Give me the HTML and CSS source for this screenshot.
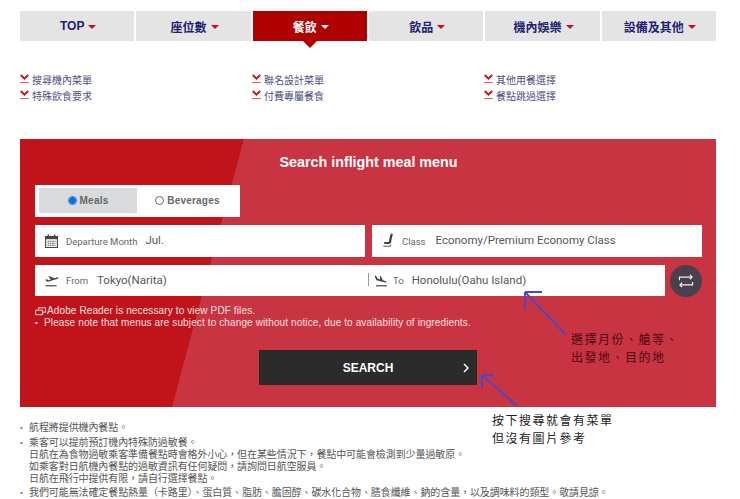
FILE: index.html
```html
<!DOCTYPE html>
<html lang="zh-Hant">
<head>
<meta charset="utf-8">
<title>機內餐飲</title>
<link rel="stylesheet" href="styles.css">
</head>
<body>
<div class="page">
  <nav class="tabs">
    <a class="tab">TOP<i class="caret"></i></a>
    <a class="tab">座位數<i class="caret"></i></a>
    <a class="tab active">餐飲<i class="caret"></i></a>
    <a class="tab">飲品<i class="caret"></i></a>
    <a class="tab">機內娛樂<i class="caret"></i></a>
    <a class="tab">設備及其他<i class="caret"></i></a>
  </nav>

  <div class="links">
    <a class="link"><svg class="chev" viewBox="0 0 9 10"><path d="M.8 1l3.700 3.700L8.200 1" fill="none" stroke="#c8141c" stroke-width="1.900"/><path d="M0 8.600h9" stroke="#d9534f" stroke-width="1"/></svg>搜尋機內菜單</a>
    <a class="link"><svg class="chev" viewBox="0 0 9 10"><path d="M.8 1l3.700 3.700L8.200 1" fill="none" stroke="#c8141c" stroke-width="1.900"/><path d="M0 8.600h9" stroke="#d9534f" stroke-width="1"/></svg>聯名設計菜單</a>
    <a class="link"><svg class="chev" viewBox="0 0 9 10"><path d="M.8 1l3.700 3.700L8.200 1" fill="none" stroke="#c8141c" stroke-width="1.900"/><path d="M0 8.600h9" stroke="#d9534f" stroke-width="1"/></svg>其他用餐選擇</a>
    <a class="link"><svg class="chev" viewBox="0 0 9 10"><path d="M.8 1l3.700 3.700L8.200 1" fill="none" stroke="#c8141c" stroke-width="1.900"/><path d="M0 8.600h9" stroke="#d9534f" stroke-width="1"/></svg>特殊飲食要求</a>
    <a class="link"><svg class="chev" viewBox="0 0 9 10"><path d="M.8 1l3.700 3.700L8.200 1" fill="none" stroke="#c8141c" stroke-width="1.900"/><path d="M0 8.600h9" stroke="#d9534f" stroke-width="1"/></svg>付費專屬餐食</a>
    <a class="link"><svg class="chev" viewBox="0 0 9 10"><path d="M.8 1l3.700 3.700L8.200 1" fill="none" stroke="#c8141c" stroke-width="1.900"/><path d="M0 8.600h9" stroke="#d9534f" stroke-width="1"/></svg>餐點跳過選擇</a>
  </div>

  <section class="panel">
    <h2 class="title">Search inflight meal menu</h2>
    <div class="radios">
      <label class="radio on"><span class="dot"></span>Meals</label>
      <label class="radio"><span class="dot"></span>Beverages</label>
    </div>
    <div class="row">
      <div class="field grow">
        <svg class="ico" viewBox="0 0 13 14"><path d="M.6 2.500h11.800v11H.6z" fill="none" stroke="#444" stroke-width="1.100"/><path d="M.6 2h11.800v3.200H.6z" fill="#444"/><path d="M3.300.4v3M9.700.4v3" stroke="#444" stroke-width="1.400"/><path d="M2.500 7.300h8M2.500 9.300h8M2.500 11.300h8" stroke="#555" stroke-width="1.100" stroke-dasharray="1.700 .6"/></svg>
        <span class="lab lab-month">Departure Month</span><span class="val">Jul.</span>
      </div>
      <div class="field grow">
        <svg class="ico ico-seat" viewBox="0 0 10 14"><path d="M8.700.3L9.800 1 8 9.600 6.700 11H1.800C1 11 .6 9.500 1.500 9h4.300L7.200 2z" fill="#444"/><path d="M.4 13.300l6.600-.3 1-1" fill="none" stroke="#444" stroke-width="1.100"/></svg>
        <span class="lab lab-class">Class</span><span class="val">Economy/Premium Economy Class</span>
      </div>
    </div>
    <div class="row">
      <div class="field route">
        <div class="half half-from">
          <svg class="ico ico-plane" viewBox="0 0 14 12"><path d="M.6 4.600l1.200-.4 1.600 1 2.400-.7L3.500 1.600l1.200-.4 4.300 2 3-.8c1.600-.4 2 .8.600 1.300L3 6.800.9 6z" fill="#444"/><path d="M.6 10.800h11" stroke="#444" stroke-width="1.200"/></svg>
          <span class="lab lab-from">From</span><span class="val">Tokyo(Narita)</span>
        </div>
        <div class="half half-to">
          <svg class="ico ico-plane" viewBox="0 0 14 12"><path d="M1 .5l1.100.2 1.500 2.700 2.600 1.100L5.700 1l1.300.4 1.900 3.900 2.700 1c1.500.6 1 1.700-.4 1.300L2.400 5.300 1 2z" fill="#444"/><path d="M2 10.800h11" stroke="#444" stroke-width="1.200"/></svg>
          <span class="lab lab-to">To</span><span class="val">Honolulu(Oahu Island)</span>
        </div>
      </div>
      <button class="swap" type="button" aria-label="swap">
        <svg viewBox="0 0 18 16" width="16" height="14"><path d="M1.500 7V3.500H16M13.500 1L16 3.500 13.500 6M16.500 9v3.500H2M4.500 10L2 12.500 4.500 15" fill="none" stroke="#f2f2f2" stroke-width="1.300"/></svg>
      </button>
    </div>
    <div class="notes">
      <p class="note"><svg class="ext" viewBox="0 0 11 9"><path d="M3.500 2.500V.8h7v4.400H8M.6 3.200h7v4.500h-7z" fill="none" stroke="#f4dcdc" stroke-width="1"/></svg>Adobe Reader is necessary to view PDF files.</p>
      <p class="note"><span class="bul">•</span>Please note that menus are subject to change without notice, due to availability of ingredients.</p>
    </div>
    <button class="search" type="button">SEARCH<svg class="go" viewBox="0 0 6 10"><path d="M1 1l4 4-4 4" fill="none" stroke="#fff" stroke-width="1.500"/></svg></button>
  </section>

  <ul class="info">
    <li>航程將提供機內餐點。</li>
    <li>乘客可以提前預訂機內特殊防過敏餐。<br>日航在為食物過敏乘客準備餐點時會格外小心，但在某些情況下，餐點中可能會檢測到少量過敏原。<br>如乘客對日航機內餐點的過敏資訊有任何疑問，請詢問日航空服員。<br>日航在飛行中提供有限，請自行選擇餐點。</li>
    <li>我們可能無法確定餐點熱量（卡路里）、蛋白質、脂肪、膽固醇、碳水化合物、膳食纖維、鈉的含量，以及調味料的類型。敬請見諒。</li>
  </ul>

  <svg class="arrows" viewBox="0 0 740 499">
    <g fill="none" stroke="#4c46c4" stroke-width="1.900">
      <path d="M566 335L525 292M525 292h17M525 292v18"/>
      <path d="M516 405L482 375M482 375h12M482 375v13"/>
    </g>
  </svg>
  <p class="memo memo-a">選擇月份、艙等、<br>出發地、目的地</p>
  <p class="memo memo-b">按下搜尋就會有菜單<br>但沒有圖片參考</p>
</div>
</body>
</html>
```
FILE: styles.css
```css
* { box-sizing: border-box; }
html, body { margin: 0; padding: 0; background: #fff; }
body { font-family: "Liberation Sans", "Noto Sans CJK TC", sans-serif; overflow: hidden; }
.page { position: relative; width: 740px; height: 499px; padding: 11px 24px 0 20px; overflow: hidden; }

.tabs { display: grid; grid-template-columns: repeat(6, 1fr); gap: 2px; height: 30px; }
.tab { position: relative; display: flex; align-items: center; justify-content: center; padding-left: 2px; background: #e4e4e4; color: #1c2170; font-size: 12px; font-weight: 700; }
.caret { display: inline-block; width: 0; height: 0; margin: 1px 0 0 4px; border-style: solid; border-width: 4px 4px 0; border-color: #c8101a transparent transparent; }
.tab.active { background: #b00000; color: #fff; }
.tab.active .caret { border-top-color: #fff; }
.tab.active::after { content: ""; position: absolute; left: 50%; top: 100%; margin-left: -7px; border-style: solid; border-width: 7px 7px 0; border-color: #b00000 transparent transparent; }

.links { display: grid; grid-template-columns: repeat(3, 232px); row-gap: 2px; margin-top: 31px; height: 67px; align-content: start; }
.link { display: flex; align-items: center; height: 14px; color: #4d4d7e; font-size: 10px; }
.chev { width: 9px; height: 10px; margin-right: 3px; flex: none; }

.panel { height: 268px; padding: 0 14px 0 15px; background: linear-gradient(105deg, #c0141a 216px, #c93442 216.500px); }
.title { margin: 0; padding-top: 15px; height: 46px; color: #fff; font-size: 14.300px; font-weight: 700; text-align: center; }
.radios { display: flex; width: 205px; height: 32px; padding: 3px 4px; background: #fff; }
.radio { display: flex; align-items: center; justify-content: center; width: 98px; height: 25px; color: #666; font-size: 10px; font-weight: 700; letter-spacing: .2px; }
.radio:not(.on) { padding-left: 3px; }
.radio.on { background: #d8dadc; }
.dot { width: 9px; height: 9px; margin-right: 3px; border: 1px solid #666; border-radius: 50%; background: #fff; }
.radio.on .dot { border-color: #0b6be0; background: radial-gradient(circle, #0b6be0 3px, #fff 3.500px); }

.row { display: flex; gap: 7px; margin-top: 8px; height: 32px; }
.field { display: flex; align-items: center; height: 32px; padding-left: 10px; background: #fff; color: #555; }
.grow { flex: 1; }
.route { width: 630px; height: 31px; padding-left: 0; }
.swap { width: 32px; height: 32px; margin-left: -2px; padding: 0; border: 0; border-radius: 50%; background: #4a3f4c; display: flex; align-items: center; justify-content: center; }
.half { display: flex; align-items: center; height: 100%; }
.half-from { width: 333px; padding-left: 10px; }
.half-to { position: relative; padding-left: 6px; }
.half-to::before { content: ""; position: absolute; left: 0; top: 8px; width: 1px; height: 13px; background: #999; }
.ico { width: 13px; height: 14px; flex: none; }
.ico-seat { width: 10px; height: 14px; margin-left: 1px; margin-top: -2px; }
.ico-plane { width: 14px; height: 12px; }
.lab { font-family: Roboto, sans-serif; font-size: 9.500px; color: #666; }
.val { margin-bottom: 2px; font-family: Roboto, sans-serif; font-size: 11.500px; color: #555; }
.route .val { margin-bottom: 1px; }
.lab-month { margin: 0 8px 0 8px; }
.lab-class { margin: 0 10px 0 9px; }
.lab-from { margin: 0 9px 0 7px; }
.lab-to { margin: 0 8px 0 5px; }

.notes { margin-top: 8px; height: 41px; color: #f8e0e0; font-size: 10px; line-height: 12px; letter-spacing: .12px; }
.note { margin: 0; display: flex; align-items: center; }
.ext { width: 11px; height: 9px; margin-right: 1px; }
.bul { width: 9px; flex: none; font-size: 8px; }

.search { display: flex; align-items: center; justify-content: center; position: relative; width: 218px; height: 35px; margin: 4px 0 0 224px; padding-top: 1px; border: 0; background: #2b2b2b; color: #fff; font: 700 12px "Liberation Sans", sans-serif; }
.go { position: absolute; right: 8px; top: 13px; width: 6px; height: 10px; }

.info { margin: 15px 0 0; padding: 0 0 0 9px; list-style: none; color: #555; font-size: 10px; line-height: 12px; letter-spacing: -.09px; }
.info li { position: relative; margin-bottom: 2px; white-space: nowrap; }
.info li:first-child { margin-bottom: 3px; }
.info li::before { content: "•"; position: absolute; left: -9px; top: 0; font-size: 8px; color: #777; }

.arrows { position: absolute; left: 0; top: 0; width: 740px; height: 499px; pointer-events: none; }
.memo { position: absolute; margin: 0; font-family: "Noto Sans CJK TC", sans-serif; font-size: 12px; line-height: 18px; letter-spacing: 1.500px; white-space: nowrap; }
.memo-a { left: 571px; top: 330px; color: #4a0a10; }
.memo-b { left: 492px; top: 411px; color: #222; }
```
